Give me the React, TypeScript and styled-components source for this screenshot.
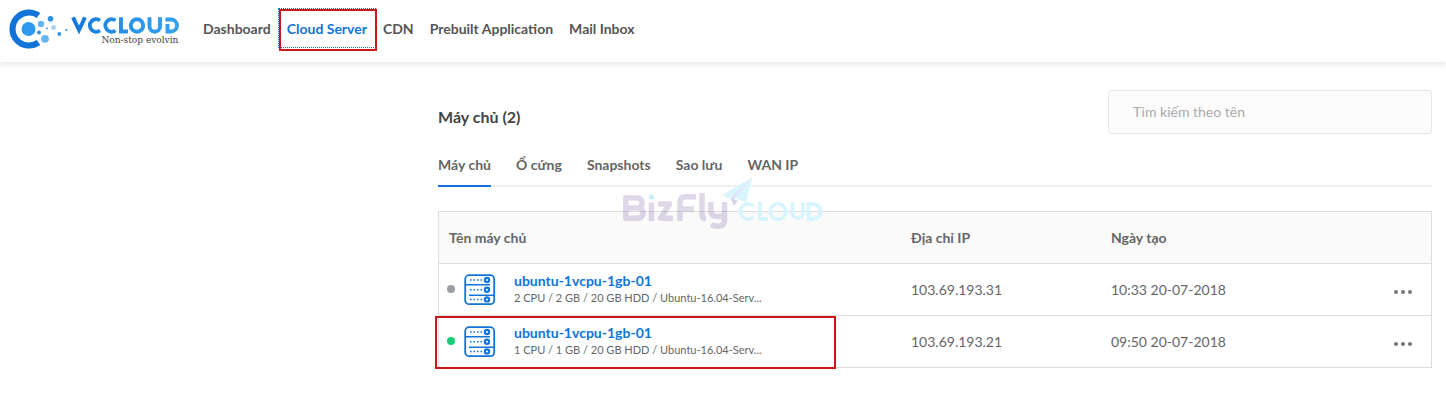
import React, { useState } from "react";
import styled, { createGlobalStyle } from "styled-components";

const GlobalStyle = createGlobalStyle`
  * { box-sizing: border-box; }
  body {
    margin: 0;
    background: #fff;
    color: #666;
    font: 14px/20px Lato, "Liberation Sans", sans-serif;
  }
`;

const Header = styled.header`
  display: flex;
  align-items: flex-start;
  height: 62px;
  padding-left: 8px;
  box-shadow: 0 3px 5px rgba(0, 0, 0, 0.08);
`;

const Brand = styled.a`
  display: block;
  width: 187px;
  height: 50px;
  flex: none;
`;

const Nav = styled.nav`
  display: flex;
  align-items: flex-start;
  padding-top: 9px;
`;

const NavLink = styled.a<{ $active?: boolean }>`
  position: relative;
  padding: 10px 8px 8px;
  font-weight: 700;
  text-decoration: none;
  white-space: nowrap;
  color: ${(p) => (p.$active ? "#1274d8" : "#555")};
  ${(p) => p.$active && "outline: 1px dotted #1f6fc0;"}
`;

const Marker = styled.span<{ $inset: string; $width: string }>`
  position: absolute;
  z-index: 1;
  inset: ${(p) => p.$inset};
  width: ${(p) => p.$width};
  border: 2px solid #cb171b;
  pointer-events: none;
`;

const Main = styled.main`
  position: relative;
  margin: 28px 14px 0 438px;
  padding-bottom: 32px;
`;

const TitleBar = styled.div`
  display: flex;
  justify-content: space-between;
  align-items: center;
`;

const Title = styled.h1`
  margin: 10px 0 0;
  font-size: 16px;
  line-height: 20px;
  color: #444;
`;

const Search = styled.input`
  width: 324px;
  height: 44px;
  padding: 0 24px 2px;
  border: 1px solid #e6e6e6;
  border-radius: 3px;
  background: #fcfcfc;
  color: #555;
  font: 14px/20px Lato, sans-serif;
  &::placeholder { color: #aaa; opacity: 1; }
`;

const Tabs = styled.div`
  display: flex;
  gap: 25px;
  margin-top: 21px;
  box-shadow: inset 0 -2px #f0f0f0;
`;

const Tab = styled.button<{ $active: boolean }>`
  padding: 0 0 10px;
  border: 0;
  border-bottom: 2px solid ${(p) => (p.$active ? "#1274d8" : "transparent")};
  background: none;
  color: #666;
  font: 700 14px/20px Lato, sans-serif;
  white-space: nowrap;
`;

const Table = styled.table`
  width: 100%;
  margin-top: 24px;
  table-layout: fixed;
  border-collapse: separate;
  border-spacing: 0;
  border: 1px solid #ddd;
  border-bottom: 0;
`;

const Row = styled.tr`
  height: 52px;
`;

const HeadCell = styled.th<{ $width?: string }>`
  width: ${(p) => p.$width || "auto"};
  padding: 0 10px;
  border-bottom: 1px solid #dcdfe2;
  background: #fafafa;
  text-align: left;
`;

const Cell = styled.td<{ $align?: string }>`
  position: relative;
  padding: 0 10px;
  border-bottom: 1px solid #dcdfe2;
  text-align: ${(p) => p.$align || "left"};
`;

const Server = styled.div`
  display: flex;
  align-items: center;
  margin-left: -2px;
`;

const Status = styled.span<{ $on: boolean }>`
  width: 8px;
  height: 8px;
  margin: 0 9px 2px 0;
  border-radius: 50%;
  background: ${(p) => (p.$on ? "#18cd76" : "#9b9fa4")};
`;

const ServerText = styled.div`
  margin-left: 18px;
  padding-bottom: 2px;
`;

const ServerName = styled.a`
  display: block;
  color: #1274d8;
  font-weight: 700;
  line-height: 18px;
  text-decoration: none;
`;

const Spec = styled.div`
  font-size: 11px;
  line-height: 16px;
`;

const More = styled.button`
  padding: 4px 0 0;
  margin-right: 8px;
  border: 0;
  background: none;
  color: #777;
  line-height: 0;
`;

const Watermark = styled.svg`
  position: absolute;
  left: 184px;
  top: 86px;
  pointer-events: none;
`;

function Logo() {
  return (
    <svg width="187" height="50" viewBox="8 0 187 50" role="img" aria-label="VCCLOUD">
      <defs>
        <linearGradient id="word" gradientUnits="userSpaceOnUse" x1="71" y1="0" x2="180" y2="0">
          <stop offset="0" stopColor="#1274d8" />
          <stop offset="0.3" stopColor="#2389e2" />
          <stop offset="1" stopColor="#35a3f2" />
        </linearGradient>
      </defs>
      <path d="M38.500 15.500A16.500 16.500 0 1 0 38.500 42.500" fill="none" stroke="#1274d8" strokeWidth="6.200" />
      <circle cx="28.500" cy="29" r="7" fill="#2b9af0" />
      <circle cx="41" cy="24" r="3.200" fill="#64b6f3" />
      <circle cx="50.500" cy="18.700" r="2.800" fill="#2b8fe2" />
      <circle cx="53.500" cy="27.500" r="2.500" fill="#a9d6f8" />
      <circle cx="39" cy="32.500" r="1.900" fill="#2b8fe2" />
      <circle cx="45" cy="38.800" r="3.900" fill="#64b6f3" />
      <circle cx="59.300" cy="34" r="1.900" fill="#2b9af0" />
      <circle cx="47" cy="28.500" r="0.900" fill="#2b8fe2" />
      <circle cx="66.300" cy="30" r="1.100" fill="#2b9af0" />
      <g fill="none" stroke="url(#word)" strokeWidth="3.900">
        <path d="M73 17.300L79 30L85 17.300" />
        <path d="M100 20.500A6.300 6.300 0 1 0 100 30.500" />
        <path d="M115.500 20.500A6.300 6.300 0 1 0 115.500 30.500" />
        <path d="M121 17.300V31.500H128" />
        <circle cx="137" cy="25.500" r="6.200" />
        <path d="M149.500 17.300V26.500A5 5 0 0 0 160 26.500V17.300" />
        <path d="M167.500 24V31.500H171A6 6 0 0 0 171 19.500H165.400" />
      </g>
      <text x="101.500" y="43" fill="#444" fontSize="10" fontFamily="'DejaVu Serif Condensed', 'DejaVu Serif', serif">Non-stop evolvin</text>
    </svg>
  );
}

function ServerIcon() {
  return (
    <svg width="32" height="32" viewBox="0 0 32 32" fill="none" stroke="#1274d8" strokeWidth="2" aria-hidden="true">
      <rect x="1.200" y="1.200" width="29" height="29" rx="4" strokeWidth="1.800" />
      <path d="M1 10.800H26M5 21.200H31" strokeWidth="1.600" />
      {[6.0, 15.7, 25.4].map((y) => (
        <g key={y}>
          <circle cx="23" cy={y} r="2.100" strokeWidth="2.200" />
          <path d={`M6 ${y}H19`} strokeWidth="1.500" strokeDasharray="1.600 1.900" />
        </g>
      ))}
    </svg>
  );
}

function BizFly() {
  return (
    <Watermark width="202" height="56" viewBox="0 0 202 56" role="img" aria-label="BizFly Cloud">
      <g opacity="0.210" fill="none" stroke="#6d4b94" strokeWidth="5.500" strokeLinejoin="round">
        <path d="M3.800 21.800H15A4.600 4.600 0 0 1 15 32H16A5.100 5.100 0 0 1 16 42.200H3.800ZM3.800 32H15" />
        <path d="M29.500 26.500V45M36 28H47.500L38.500 42.200H51" />
        <path d="M58 45V26Q58 20.800 63.500 20.800H74M58 33H72" />
        <path d="M80 17V39Q80 42.500 84 42.500" />
        <path d="M88.800 26V34Q88.800 40.500 95 40.500H102.500M102.500 26V44Q102.500 50.200 96 50.200Q92 50.200 89 48.800" />
      </g>
      <circle cx="29.500" cy="21" r="2.600" fill="#c5effa" />
      <g fill="none" stroke="#d8f5fd" strokeWidth="3.800">
        <path d="M131.500 30A7.700 7.700 0 1 0 131.500 41M138 26V43H146" />
        <circle cx="156" cy="35.500" r="7.800" />
        <path d="M170.500 26V37.500A5.300 5.300 0 0 0 181 37.500V26M186.500 28V43H191A7.500 7.500 0 0 0 191 28Z" />
      </g>
      <path d="M130.500 1L100 19L108 22.500ZM130.500 1L113 22L124 26.500Z" fill="#d8f5fd" />
      <path d="M130.500 1L108 22.500L112 30L113 22Z" fill="#dde3fa" />
      <path d="M110 23L116 25L112 30Z" fill="#ddd3e8" />
    </Watermark>
  );
}

const navItems = ["Dashboard", "Cloud Server", "CDN", "Prebuilt Application", "Mail Inbox"];
const tabItems = ["Máy chủ", "Ổ cứng", "Snapshots", "Sao lưu", "WAN IP"];
const servers = [
  { name: "ubuntu-1vcpu-1gb-01", spec: "2 CPU / 2 GB / 20 GB HDD / Ubuntu-16.04-Serv...", ip: "103.69.193.31", date: "10:33 20-07-2018", on: false },
  { name: "ubuntu-1vcpu-1gb-01", spec: "1 CPU / 1 GB / 20 GB HDD / Ubuntu-16.04-Serv...", ip: "103.69.193.21", date: "09:50 20-07-2018", on: true },
];

export default function App() {
  const [tab, setTab] = useState(tabItems[0]);
  return (
    <>
      <GlobalStyle />
      <Header>
        <Brand href="#"><Logo /></Brand>
        <Nav>
          {navItems.map((item) => (
            <NavLink key={item} href="#" $active={item === "Cloud Server"}>
              {item}
              {item === "Cloud Server" && <Marker $inset="0 -2px -4px 0" $width="auto" />}
            </NavLink>
          ))}
        </Nav>
      </Header>
      <Main>
        <TitleBar>
          <Title>Máy chủ (2)</Title>
          <Search type="search" aria-label="Tìm kiếm theo tên" placeholder="Tìm kiếm theo tên" />
        </TitleBar>
        <Tabs role="tablist">
          {tabItems.map((item) => (
            <Tab key={item} role="tab" aria-selected={item === tab} $active={item === tab} onClick={() => setTab(item)}>
              {item}
            </Tab>
          ))}
        </Tabs>
        <Table>
          <thead>
            <Row>
              <HeadCell>Tên máy chủ</HeadCell>
              <HeadCell $width="200px">Địa chỉ IP</HeadCell>
              <HeadCell $width="200px">Ngày tạo</HeadCell>
              <HeadCell $width="130px" aria-label="Menu" />
            </Row>
          </thead>
          <tbody>
            {servers.map((s) => (
              <Row key={s.ip}>
                <Cell>
                  <Server>
                    <Status $on={s.on} />
                    <ServerIcon />
                    <ServerText>
                      <ServerName href="#">{s.name}</ServerName>
                      <Spec>{s.spec}</Spec>
                    </ServerText>
                  </Server>
                  {s.on && <Marker $inset="0 auto -2px -4px" $width="401px" />}
                </Cell>
                <Cell>{s.ip}</Cell>
                <Cell>{s.date}</Cell>
                <Cell $align="right">
                  <More aria-label="Menu">
                    <svg width="20" height="6" viewBox="0 0 20 6" fill="currentColor">
                      <circle cx="3" cy="3" r="2" />
                      <circle cx="10" cy="3" r="2" />
                      <circle cx="17" cy="3" r="2" />
                    </svg>
                  </More>
                </Cell>
              </Row>
            ))}
          </tbody>
        </Table>
        <BizFly />
      </Main>
    </>
  );
}
